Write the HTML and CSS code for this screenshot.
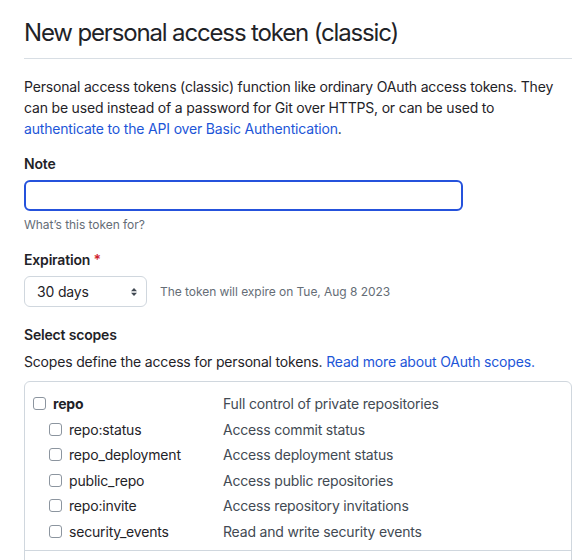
FILE: index.html
```html
<!DOCTYPE html>
<html lang="en">
<head>
<meta charset="utf-8">
<title>New personal access token (classic)</title>
<link rel="stylesheet" href="styles.css">
</head>
<body>
<main class="page">
  <h2 class="subhead">New personal access token (classic)</h2>
  <p class="intro">Personal access tokens (classic) function like ordinary OAuth access tokens. They can be used instead of a password for Git over HTTPS, or can be used to <a href="#">authenticate to the API over Basic Authentication</a>.</p>

  <div class="field">
    <label class="label" for="note">Note</label>
    <input class="input" id="note" type="text">
    <p class="hint">What’s this token for?</p>
  </div>

  <div class="field expiration">
    <label class="label">Expiration <span class="req">*</span></label>
    <div class="expire-row">
      <div class="select">
        <span>30 days</span>
        <svg class="arrows" width="8" height="12" viewBox="0 0 8 12"><path d="M4 2 L7 5.2 H1 Z" fill="#424a53"/><path d="M4 10 L7 6.8 H1 Z" fill="#424a53"/></svg>
      </div>
      <span class="expire-note">The token will expire on Tue, Aug 8 2023</span>
    </div>
  </div>

  <div class="field scopes-field">
    <div class="label">Select scopes</div>
    <p class="scopes-desc">Scopes define the access for personal tokens. <a href="#">Read more about OAuth scopes.</a></p>
  </div>

  <div class="scopes">
    <div class="group">
      <div class="row parent"><span class="name"><span class="cb"></span><b>repo</b></span><span class="desc">Full control of private repositories</span></div>
      <div class="row child"><span class="name"><span class="cb"></span>repo:status</span><span class="desc">Access commit status</span></div>
      <div class="row child"><span class="name"><span class="cb"></span>repo_deployment</span><span class="desc">Access deployment status</span></div>
      <div class="row child"><span class="name"><span class="cb"></span>public_repo</span><span class="desc">Access public repositories</span></div>
      <div class="row child"><span class="name"><span class="cb"></span>repo:invite</span><span class="desc">Access repository invitations</span></div>
      <div class="row child"><span class="name"><span class="cb"></span>security_events</span><span class="desc">Read and write security events</span></div>
    </div>
    <div class="group next"></div>
  </div>
</main>
</body>
</html>
```
FILE: styles.css
```css
* { box-sizing: border-box; }
html, body { margin: 0; background: #ffffff; }
body {
  font-family: Inter, "Noto Sans", sans-serif;
  font-size: 14px;
  line-height: 21px;
  letter-spacing: -0.18px;
  color: #1f2328;
}
.page { padding: 0 16px 0 24px; width: 588px; }
.subhead {
  margin: 0;
  padding: 18px 0 10px;
  font-size: 24px;
  line-height: 30px;
  font-weight: 400;
  letter-spacing: -1.15px;
  border-bottom: 1px solid #d8dee4;
}
.intro { margin: 17px 0 0; }
a { color: #1d56d8; text-decoration: none; }
.field { margin-top: 14px; }
.field.expiration { margin-top: 15px; }
.label { display: block; font-weight: 600; }
.req { color: #cf222e; }
.input {
  display: block;
  margin-top: 6px;
  width: 439px;
  height: 31px;
  border: 2px solid #2552dc;
  border-radius: 6px;
  outline: none;
  background: #fff;
}
.hint { margin: 5px 0 0; font-size: 12px; line-height: 18px; letter-spacing: -0.05px; color: #656d76; }
.expire-row { display: flex; align-items: center; gap: 13px; margin-top: 6px; }
.select {
  width: 123px;
  height: 31px;
  border: 1px solid #d0d7de;
  border-radius: 6px;
  display: flex;
  align-items: center;
  justify-content: space-between;
  padding: 0 8px 0 12px;
  background: #fff;
}
.arrows { display: block; }
.expire-note { font-size: 12px; letter-spacing: -0.05px; color: #656d76; }
.scopes-field { margin-top: 17px; }
.scopes-desc { margin: 6px 0 0; }
.scopes {
  margin-top: 9px;
  border: 1px solid #d0d7de;
  border-radius: 6px;
}
.group { padding: 9px 0 6px 8px; }
.group.next { border-top: 1px solid #d0d7de; height: 20px; }
.row {
  display: grid;
  grid-template-columns: 190px 1fr;
  height: 25.5px;
  align-items: center;
  color: #1f2328;
}
.name { display: flex; align-items: center; gap: 7px; }
.child .name { padding-left: 16px; }
.parent b { font-weight: 700; }
.desc { color: #424a53; }
.cb {
  width: 13px;
  height: 13px;
  border: 1px solid #8c959f;
  border-radius: 3px;
  background: #fff;
  flex: none;
}
```
